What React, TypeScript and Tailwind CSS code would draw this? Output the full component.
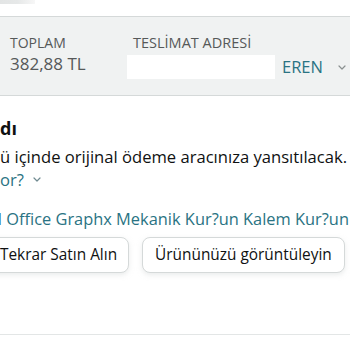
import React from "react";

function Chevron({ className }: { className?: string }) {
  return (
    <svg className={className} viewBox="0 0 8 5" width="8" height="5" fill="none">
      <path d="M1 1l3 3 3-3" stroke="currentColor" strokeWidth="1.2" strokeLinecap="round" strokeLinejoin="round" />
    </svg>
  );
}

function CutLine({ prefix, offset, children, className }: { prefix: string; offset: string; children: React.ReactNode; className?: string }) {
  return (
    <div className={`flex whitespace-nowrap ${offset} ${className ?? ""}`}>
      <span className="w-[400px] shrink-0 flex justify-end overflow-hidden">{prefix}</span>
      {children}
    </div>
  );
}

export default function App() {
  return (
    <div className="w-[350px] h-[350px] overflow-hidden bg-white font-['Open_Sans','Noto_Sans',sans-serif] text-[#0f1111]">
      <div className="h-[4px] w-[35px] bg-gradient-to-r from-[#e3e5e5] via-[#e6e8e8] to-[#f7f7f7]" />

      <div className="mt-[12px] h-[80px] border-y border-[#d5d9d9] bg-[#f0f2f2] flex pl-[10px] pt-[16px]">
        <div className="w-[117px] shrink-0">
          <div className="text-[14px] leading-[20px] text-[#565959]">TOPLAM</div>
          <div className="text-[17px] leading-[24px] text-[#565959] -mt-px">382,88 TL</div>
        </div>
        <div className="flex-1">
          <div className="text-[14.5px] leading-[20px] text-[#565959] pl-[6px]">TESLİMAT ADRESİ</div>
          <div className="mt-[2px] flex items-center h-[24px]">
            <div className="w-[148px] h-[24px] bg-white shrink-0" />
            <span className="ml-[7px] text-[16.5px] leading-[24px] text-[#2a7383]">EREN</span>
            <Chevron className="ml-[15px] text-[#8a9090]" />
          </div>
        </div>
      </div>

      <CutLine prefix="Geri ödeme yapıl" offset="-ml-[400px]" className="mt-[20px] text-[18px] leading-[24px] font-bold">
        <span>dı</span>
      </CutLine>
      <CutLine prefix="Geri ödemeniz 3-5 iş gün" offset="-ml-[400px]" className="mt-[5px] text-[16.6px] leading-[23px]">
        <span>ü içinde orijinal ödeme aracınıza yansıtılacak.</span>
      </CutLine>
      <CutLine prefix="Geri ödeme nasıl işliy" offset="-ml-[400px]" className="text-[16.6px] leading-[23px] items-center">
        <span className="text-[#2a7383]">or?</span>
        <Chevron className="ml-[9px] text-[#6f8a90]" />
      </CutLine>

      <CutLine prefix="Mekanik Kalem Seti Orijinal" offset="-ml-[398px]" className="mt-[16px] text-[16.4px] leading-[24px] text-[#2a7383]">
        <span>&nbsp;Office Graphx Mekanik Kur?un Kalem Kur?un</span>
      </CutLine>

      <div className="mt-[6px] -ml-[12px] flex gap-[13px] whitespace-nowrap">
        <button className="h-[36px] px-[11px] rounded-[8px] border border-[#d5d9d9] bg-white shadow-[0_2px_5px_rgba(213,217,217,0.5)] text-[15.4px] leading-[20px] text-[#0f1111]">
          Tekrar Satın Alın
        </button>
        <button className="h-[36px] px-[12px] rounded-[8px] border border-[#d5d9d9] bg-white shadow-[0_2px_5px_rgba(213,217,217,0.5)] text-[15.4px] leading-[20px] text-[#0f1111]">
          Ürününüzü görüntüleyin
        </button>
      </div>

      <div className="mt-[61px] h-px bg-[#e3e6e6]" />
    </div>
  );
}
